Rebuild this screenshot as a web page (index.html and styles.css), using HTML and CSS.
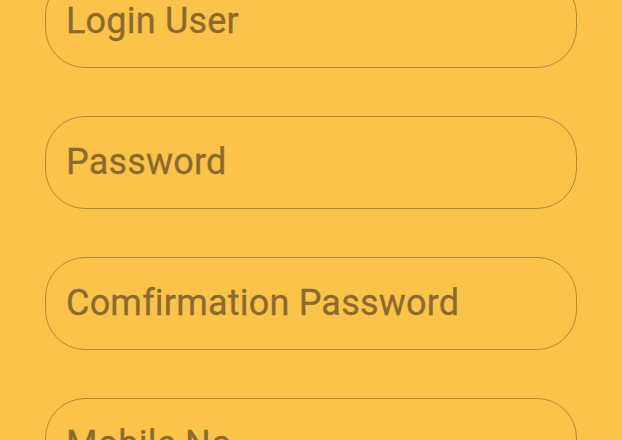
FILE: index.html
```html
<!DOCTYPE html>
<html>
<head>
<meta charset="utf-8">
<link rel="stylesheet" href="styles.css">
</head>
<body>
<div class="form">
  <div class="field"><span class="label">Login User</span></div>
  <div class="field"><span class="label">Password</span></div>
  <div class="field"><span class="label">Comfirmation Password</span></div>
  <div class="field"><span class="label">Mobile No</span></div>
</div>
</body>
</html>
```
FILE: styles.css
```css
html, body {
  margin: 0;
  padding: 0;
  background: #fcc34b;
  overflow: hidden;
  height: 440px;
}
.form {
  display: flex;
  flex-direction: column;
  gap: 48px;
  margin-top: -25px;
  padding-left: 45px;
  width: 532px;
}
.field {
  box-sizing: border-box;
  height: 93px;
  border: 1.5px solid #b08a3c;
  border-radius: 40px;
  display: flex;
  align-items: center;
  padding-left: 20px;
  padding-bottom: 2px;
}
.label {
  font-family: Roboto, "Noto Sans", sans-serif;
  font-size: 36px;
  letter-spacing: 0.2px;
  color: #8a6a2f;
  -webkit-text-stroke: 0.3px #8a6a2f;
}
```
